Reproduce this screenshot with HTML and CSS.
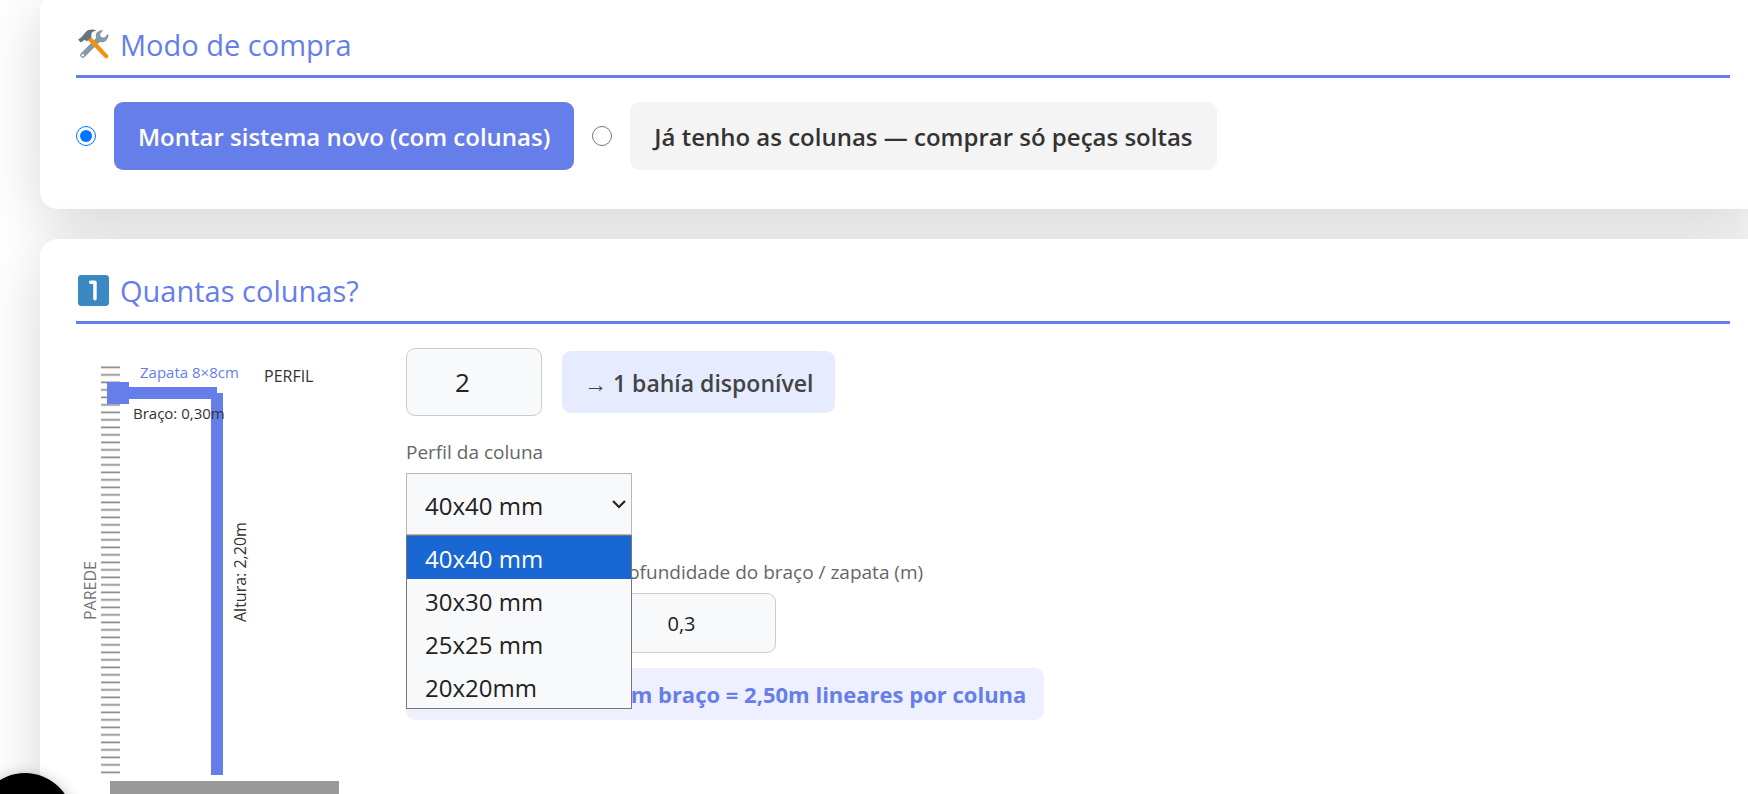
FILE: index.html
```html
<!DOCTYPE html>
<html lang="pt-BR">

<head>
    <meta charset="UTF-8" />
    <meta name="viewport" content="width=device-width, initial-scale=1.0" />
    <title>Configurador de colunas</title>
    <link rel="stylesheet" href="styles.css">
</head>

<body>
    <main class="container">
        <section class="card">
            <h2 class="card-title">
                <svg class="title-icon" viewBox="0 0 32 32" aria-hidden="true">
                    <path d="M5 27 L22 10" stroke="#8899a6" stroke-width="5.5" stroke-linecap="round" />
                    <path d="M26 1 C20 1 17 5 19 10 C20 14 25 15 29 12 C31 10 32 8 31 5 L27 9 L23 8 L23 5 Z" fill="#8899a6" />
                    <circle cx="5" cy="27" r="1.3" fill="#fff" />
                    <path d="M12 10 L29 28" stroke="#f4900c" stroke-width="4.5" stroke-linecap="round" />
                    <path d="M0 11 L4 8 L8 3 C11 0 16 0 19 2 C15 2 13 4 14 8 L9 13 L7 11 L3 14 Z" fill="#66757f" />
                </svg>
                Modo de compra
            </h2>
            <div class="mode-options">
                <input type="radio" name="modo" id="modoNovo" checked />
                <label for="modoNovo">Montar sistema novo (com colunas)</label>
                <input type="radio" name="modo" id="modoPecas" />
                <label for="modoPecas">Já tenho as colunas — comprar só peças soltas</label>
            </div>
        </section>

        <section class="card">
            <h2 class="card-title">
                <svg class="title-icon" viewBox="0 0 32 32" aria-hidden="true">
                    <rect width="32" height="32" rx="3.5" fill="#3b88c3" />
                    <path d="M13 7.5 H17.5 V24.5" fill="none" stroke="#fff" stroke-width="3.6" stroke-linecap="round" stroke-linejoin="round" />
                </svg>
                Quantas colunas?
            </h2>
            <div class="columns-layout">
                <svg class="diagram" viewBox="0 0 294 480" role="img" aria-label="Perfil da coluna na parede">
                    <defs>
                        <pattern id="wall" x="0" y="18" width="20" height="7.5" patternUnits="userSpaceOnUse">
                            <rect y="0.5" width="20" height="1.7" fill="#888" />
                        </pattern>
                    </defs>
                    <rect x="25" y="18" width="19" height="409" fill="url(#wall)" />
                    <rect x="31" y="34" width="22" height="22" class="steel" />
                    <rect x="53" y="39" width="88" height="12" class="steel" />
                    <rect x="135" y="45" width="12" height="382" class="steel" />
                    <rect x="34" y="433" width="229" height="30" fill="#999" />
                    <text x="64" y="30" class="label-sm label-blue">Zapata 8×8cm</text>
                    <text x="188" y="34" class="label-md">PERFIL</text>
                    <text x="57" y="71" class="label-sm">Braço: 0,30m</text>
                    <text x="-274" y="170" class="label-md" transform="rotate(-90)">Altura: 2,20m</text>
                    <text x="-272" y="20" class="label-md label-gray" transform="rotate(-90)">PAREDE</text>
                </svg>

                <form class="fields">
                    <div class="count-row">
                        <input type="number" class="input input-count" value="2" aria-label="Quantidade de colunas" />
                        <span class="badge">→ 1 bahía disponível</span>
                    </div>

                    <div class="field profile-field">
                        <label for="perfil">Perfil da coluna</label>
                        <div class="select-wrap">
                            <select id="perfil" class="select">
                                <option>40x40 mm</option>
                                <option>30x30 mm</option>
                                <option>25x25 mm</option>
                                <option>20x20mm</option>
                            </select>
                            <svg class="chevron" viewBox="0 0 14 10" aria-hidden="true">
                                <path d="M1 2 L7 8 L13 2" fill="none" stroke="#222" stroke-width="2.2" />
                            </svg>
                            <ul class="menu">
                                <li class="active">40x40 mm</li>
                                <li>30x30 mm</li>
                                <li>25x25 mm</li>
                                <li>20x20mm</li>
                            </ul>
                        </div>
                    </div>

                    <div class="size-row">
                        <div class="field">
                            <label for="altura">Altura (m)</label>
                            <input type="text" inputmode="decimal" id="altura" class="input" value="2,2" />
                        </div>
                        <div class="field">
                            <label for="braco">Profundidade do braço / zapata (m)</label>
                            <input type="text" inputmode="decimal" id="braco" class="input" value="0,3" />
                        </div>
                    </div>

                    <div class="total">2,20m altura + 0,30m braço = 2,50m lineares por coluna</div>
                </form>
            </div>
        </section>
    </main>

    <button type="button" class="float-btn" aria-label="Ajuda"></button>
</body>

</html>
```
FILE: styles.css
```css
* {
    margin: 0;
    padding: 0;
    box-sizing: border-box;
    font-family: 'Segoe UI', 'Open Sans', sans-serif;
}

body {
    background: #fff;
    color: #333;
    overflow: hidden;
}

.container {
    margin: -7px -18px 0 40px;
}

.card {
    background: #fff;
    border-radius: 18px;
    padding: 36px;
    margin-bottom: 30px;
    box-shadow: 0 15px 60px rgba(0, 0, 0, 0.16);
}

.card-title {
    display: flex;
    align-items: center;
    gap: 11px;
    height: 49px;
    padding: 0 0 16px 2px;
    margin-bottom: 24px;
    border-bottom: 3px solid #667eea;
    color: #667eea;
    font-size: 29px;
    font-weight: 400;
}

.title-icon {
    width: 31px;
    height: 31px;
}

.mode-options {
    display: flex;
    align-items: center;
    gap: 18px;
    margin-bottom: 3px;
}

.mode-options input {
    width: 20px;
    height: 20px;
    accent-color: #0075ff;
}

.mode-options label {
    padding: 18px 24px 16px;
    border-radius: 9px;
    background: #f4f4f4;
    font-size: 24px;
    line-height: 34px;
    font-weight: 600;
}

.mode-options input:checked+label {
    background: #667eea;
    color: #fff;
}

.columns-layout {
    display: flex;
    align-items: flex-start;
    gap: 36px;
}

.diagram {
    flex: none;
    width: 294px;
}

.steel {
    fill: #667eea;
}

.label-sm,
.label-md {
    font-size: 15px;
    fill: #333;
}

.label-md {
    font-size: 16px;
}

.label-blue {
    fill: #667eea;
}

.label-gray {
    fill: #777;
}

.fields {
    flex: 1;
}

.count-row {
    display: flex;
    align-items: center;
    gap: 20px;
    margin-bottom: 24px;
}

.input {
    width: 167px;
    height: 60px;
    padding-right: 22px;
    border: 1px solid #ccc;
    border-radius: 9px;
    background: #f7f9fa;
    color: #222;
    font-size: 20px;
    text-align: center;
    appearance: textfield;
}

.input-count {
    width: 136px;
    height: 68px;
    padding-right: 8px;
    font-size: 26px;
}

.badge {
    padding: 15px 22px 13px;
    border-radius: 9px;
    background: #e7ebff;
    color: #444;
    font-size: 23px;
    line-height: 34px;
    font-weight: 600;
}

.field label {
    display: block;
    margin-bottom: 8px;
    color: #666;
    font-size: 19px;
    line-height: 25px;
}

.profile-field {
    margin-bottom: 25px;
}

.select-wrap {
    position: relative;
    width: 226px;
}

.select {
    display: block;
    width: 100%;
    height: 62px;
    padding: 2px 18px 0;
    border: 1px solid #b5b5bd;
    border-radius: 0;
    background: #f7f9fa;
    color: #222;
    font-size: 24px;
    appearance: none;
}

.chevron {
    position: absolute;
    right: 6px;
    top: 26px;
    width: 14px;
    height: 10px;
}

.menu {
    position: absolute;
    top: 100%;
    left: 0;
    z-index: 2;
    width: 100%;
    border: 1px solid #777;
    background: #f7f9fa;
    color: #222;
    font-size: 24px;
    line-height: 41px;
    list-style: none;
}

.menu li {
    padding: 2px 0 0 18px;
}

.menu .active {
    background: #1967d2;
    color: #fff;
}

.size-row {
    display: flex;
    gap: 36px;
    margin-bottom: 15px;
}

.size-row .field {
    width: 167px;
    white-space: nowrap;
}

.total {
    width: fit-content;
    padding: 11px 18px;
    border-radius: 9px;
    background: #eef0ff;
    color: #667eea;
    font-size: 22px;
    line-height: 30px;
    font-weight: 700;
}

.float-btn {
    position: fixed;
    left: -23px;
    bottom: -75px;
    width: 96px;
    height: 96px;
    border: none;
    border-radius: 50%;
    background: #000;
    box-shadow: 0 3px 15px rgba(0, 0, 0, 0.3);
}
```
